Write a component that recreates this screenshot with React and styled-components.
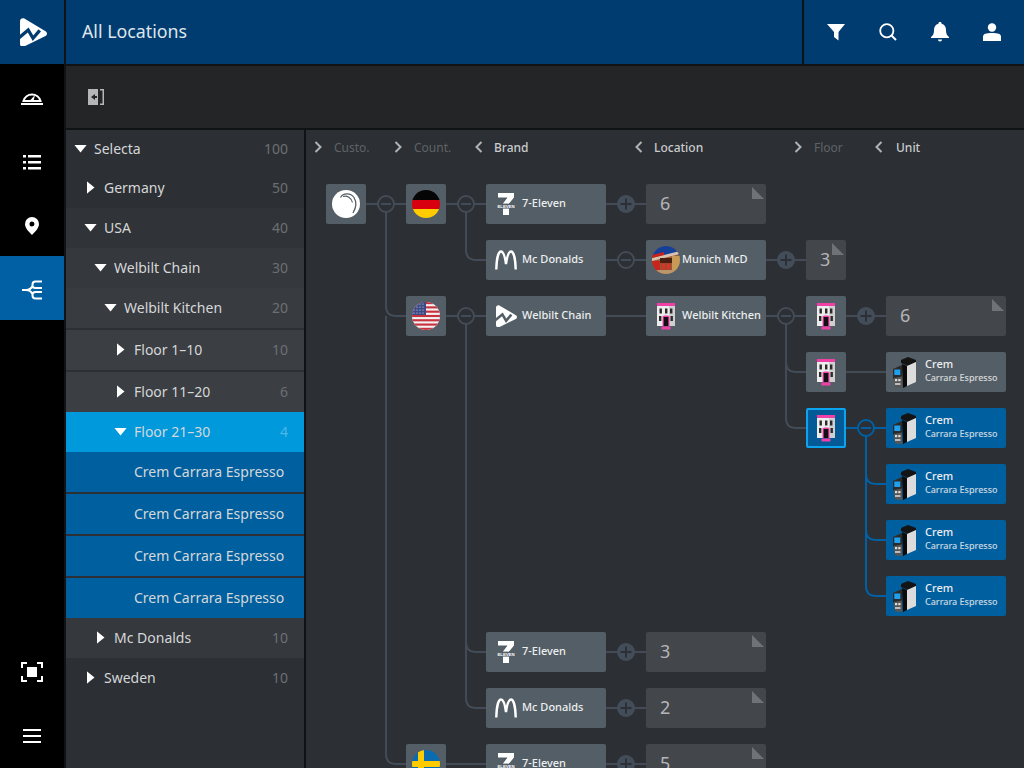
import React from "react";
import styled, { createGlobalStyle } from "styled-components";

const Global = createGlobalStyle`
  html, body { margin: 0; padding: 0; height: 100%; background: #000; overflow: hidden; }
  body { font-family: "Noto Sans", "Open Sans", sans-serif; }
  * { box-sizing: border-box; }
`;

const Shell = styled.div`
  width: 1024px; height: 768px; display: grid;
  grid-template-columns: 64px 1fr; grid-template-rows: 64px 1fr;
  column-gap: 2px; row-gap: 2px; background: #111214; overflow: hidden;
`;
const LogoCell = styled.div`
  background: #003c70; display: flex; align-items: center; justify-content: center;
  padding-left: 3px;
`;
const TopBar = styled.header`
  background: #003c70; display: flex; align-items: stretch;
`;
const Title = styled.h1`
  flex: 1; margin: 0; padding: 0 0 2px 16px; display: flex; align-items: center;
  font-size: 17.8px; font-weight: 400; color: #dfe6ec;
`;
const TopActions = styled.div`
  width: 222px; border-left: 2px solid #111214; display: flex; align-items: center;
  padding-left: 6px;
`;
const TopAction = styled.div`
  width: 52px; display: flex; justify-content: center; align-items: center; color: #fff;
`;
const Rail = styled.nav`
  background: #000; display: flex; flex-direction: column; margin-top: -2px;
`;
const RailItem = styled.div`
  height: 64px; display: flex; align-items: center; justify-content: center; color: #fff;
  padding-top: ${p => (p.$bottom ? 0 : 4)}px;
  background: ${p => (p.$active ? "#0060a3" : "transparent")};
`;
const Spacer = styled.div`flex: 1;`;
const Main = styled.main`
  display: grid; grid-template-rows: 62px 1fr; row-gap: 2px; min-height: 0;
`;
const Toolbar = styled.div`
  background: #232527; display: flex; align-items: center; padding-left: 22px; color: #b4b6b8;
`;
const Body = styled.div`
  display: grid; grid-template-columns: 238px 1fr; column-gap: 2px; min-height: 0;
`;
const Tree = styled.div`
  background: #2c2f33; display: flex; flex-direction: column;
`;
const bgFor = {
  base: "#2c2f33", l1: "#303337", l2: "#35383c", l3: "#383b3f", l4: "#3b3e42",
  selected: "#0099dc", leaf: "#005f9f",
};
const Row = styled.div`
  height: ${p => p.$h || 40}px; flex: none; display: flex; align-items: center;
  padding-left: ${p => 8 + p.$level * 10}px; padding-right: 16px; padding-bottom: 1px;
  margin-top: ${p => (p.$gap ? 2 : 0)}px;
  background: ${p => bgFor[p.$tone]};
  color: #d5d7d9; font-size: 14px;
`;
const Caret = styled.span`
  width: 13px; height: 12px; margin-right: 7px; flex: none; display: flex;
  align-items: center; justify-content: center;
`;
const Down = styled.i`
  display: block; width: 13px; height: 8px; background: #fff;
  clip-path: polygon(0 0, 100% 0, 50% 100%);
`;
const Right = styled.i`
  display: block; width: 8px; height: 13px; background: #fff;
  clip-path: polygon(0 0, 100% 50%, 0 100%);
`;
const RowLabel = styled.span`
  flex: 1; padding-left: ${p => (p.$leaf ? 20 : 0)}px; white-space: nowrap;
`;
const RowCount = styled.span`
  color: ${p => (p.$selected ? "#4fb6e6" : "#6c7074")};
`;
const Canvas = styled.section`
  position: relative; background: #2c2f33; overflow: hidden;
`;
const ColHeads = styled.div`
  display: grid; grid-template-columns: 40px 40px 40px 40px 120px 40px 120px 40px 40px 40px 120px;
  padding: 9px 0 0 8px; height: 54px; align-items: start;
`;
const ColHead = styled.div`
  grid-column: ${p => p.$col}; display: flex; align-items: center; height: 16px;
  white-space: nowrap; font-size: 12px;
  padding-left: ${p => (p.$nudge ? 1 : 0)}px;
  font-weight: ${p => (p.$open ? 500 : 400)};
  color: ${p => (p.$open ? "#c9cbcd" : "#5f6367")};
`;
const Chevron = styled.svg`
  width: 8px; height: 12px; margin-right: ${p => p.$gap}px; flex: none;
  color: #b0b3b6;
`;
const Links = styled.svg`
  position: absolute; left: 0; top: 0; width: 718px; height: 638px; z-index: 2;
`;
const Diagram = styled.div`
  position: relative; display: grid; margin-left: 20px;
  grid-template-columns: 40px 40px 40px 40px 120px 40px 120px 40px 40px 40px 120px;
  grid-auto-rows: 40px; row-gap: 16px;
`;
const nodeBg = { plain: "#545e66", count: "#43464a", active: "#005f9f", focus: "#035a97" };
const Node = styled.div`
  grid-column: ${p => p.$col}; grid-row: ${p => p.$row};
  position: relative; z-index: 3; border-radius: 2px; color: #eceeef;
  background: ${p => nodeBg[p.$kind || "plain"]};
  display: flex; align-items: center;
  justify-content: ${p => (p.$square ? "center" : "flex-start")};
  border: ${p => (p.$kind === "focus" ? "2px solid #0aa5ee" : "none")};
`;
const IconBox = styled.span`
  width: ${p => p.$w ?? 40}px; margin-right: ${p => p.$after ?? -4}px; flex: none;
  display: flex; justify-content: center; align-items: center;
`;
const NodeName = styled.span`
  font-size: 11px; font-weight: 500; white-space: nowrap; margin-top: -3px;
`;
const NodeStack = styled.span`
  display: flex; flex-direction: column; white-space: nowrap; line-height: 14px; margin-top: -2px;
`;
const StackTop = styled.span`font-size: 11px; font-weight: 500;`;
const StackSub = styled.span`font-size: 9px; font-weight: 500; opacity: .85;`;
const CountNum = styled.span`
  font-size: 18px; color: #b4b6b8; padding-left: 14px; margin-top: -2px;
`;
const Fold = styled.i`
  position: absolute; top: 3px; right: 2px; width: 12px; height: 12px; background: #6f7377;
  clip-path: polygon(0 0, 100% 100%, 0 100%);
`;

const LogoMark = ({ size = 28, cut = "#003c70" }) => (
  <svg width={size} height={size * 1.07} viewBox="0 0 28 30">
    <path d="M0 3.500C0 1 2.200-.4 4.500 .6L26.500 13.800C28.500 15 28.500 17.600 26.500 18.600L4.500 29.500C2.200 30.500 0 29.300 0 27Z" fill="#fff" />
    <path d="M-1 20.500 8.500 12.500 13.500 21 20.500 12.800" fill="none" stroke={cut} strokeWidth="3.400" />
  </svg>
);

const Seven = () => (
  <svg width="18" height="22" viewBox="0 0 18 22">
    <path d="M1 0H17V4.500L12 10.500V22H6V10.500L10.500 4.500H1Z" fill="#fff" />
    <rect x="0" y="10.600" width="18" height="5" fill="#545e66" />
    <text x="9" y="14.800" textAnchor="middle" fontSize="4.300" fontWeight="700" fontFamily="Liberation Sans" fill="#fff">ELEVEN</text>
  </svg>
);

const Arches = () => (
  <svg width="22" height="20" viewBox="0 0 22 20">
    <path d="M1.300 19.500C1.500 9 3.500 1.500 6 1.500 8.500 1.500 10 7 11 14 12 7 13.500 1.500 16 1.500 18.500 1.500 20.500 9 20.700 19.500"
      fill="none" stroke="#fff" strokeWidth="2.400" />
  </svg>
);

const Swan = () => (
  <svg width="28" height="28" viewBox="0 0 28 28">
    <circle cx="14" cy="14" r="14" fill="#fff" />
    <path d="M8.500 7.500C11 3 18.500 2.500 22 7.500 24.500 11.500 24.500 17 21 23" fill="none" stroke="#545e66" strokeWidth="1.300" />
    <path d="M11 6.500C15 5 19.500 8 20.500 12.500" fill="none" stroke="#545e66" strokeWidth="1.100" />
  </svg>
);

const FlagClip = ({ id, children }) => (
  <svg width="28" height="28" viewBox="0 0 28 28">
    <defs><clipPath id={id}><circle cx="14" cy="14" r="14" /></clipPath></defs>
    <g clipPath={`url(#${id})`}>{children}</g>
  </svg>
);
const Germany = () => (
  <FlagClip id="de">
    <rect width="28" height="10" fill="#050505" />
    <rect y="10" width="28" height="9" fill="#d8000f" />
    <rect y="19" width="28" height="9" fill="#ffcc00" />
  </FlagClip>
);
const Usa = () => (
  <FlagClip id="us">
    <rect width="28" height="28" fill="#f2f2f2" />
    {[0, 4.300, 8.600, 12.900, 17.200, 21.500, 25.800].map(y => (
      <rect key={y} y={y} width="28" height="2.150" fill="#c8313e" />
    ))}
    <rect width="14" height="13" fill="#3c4a86" />
    {[2, 5, 8, 11].map(y => [2, 5, 8, 11].map(x => (
      <circle key={`${x}-${y}`} cx={x} cy={y} r=".6" fill="#dfe3f0" />
    )))}
  </FlagClip>
);
const Sweden = () => (
  <FlagClip id="se">
    <rect width="28" height="28" fill="#0b6bb0" />
    <rect x="6" width="6" height="28" fill="#fecb00" />
    <rect y="11" width="28" height="6" fill="#fecb00" />
  </FlagClip>
);
const MunichPhoto = () => (
  <FlagClip id="mu">
    <rect width="28" height="28" fill="#9a5a34" />
    <rect width="28" height="9" fill="#163f9a" />
    <path d="M0 12 28 5V8L0 15Z" fill="#d9c2ae" />
    <path d="M0 9 12 6V9L0 12Z" fill="#c8201c" />
    <rect y="15" width="8" height="13" fill="#c9231d" />
    <rect x="8" y="12" width="12" height="5" fill="#4a1f12" />
    <rect x="9" y="17" width="10" height="7" fill="#a8432c" />
    <path d="M10 18h3v5h-3ZM15 18h3v5h-3Z" fill="#d2372c" />
    <rect x="20" y="10" width="8" height="14" fill="#c79a58" />
    <rect y="24" width="28" height="4" fill="#b9966c" />
  </FlagClip>
);
const Building = () => (
  <svg width="18" height="27" viewBox="0 0 18 27">
    <rect x="0" y="3" width="18" height="20" fill="#ececec" />
    <rect x="12" y="3" width="6" height="20" fill="#cfcfcf" />
    <rect x="0" y="0" width="18" height="3" fill="#f13fa8" />
    {[2.500, 8, 13].map(x => <rect key={x} x={x} y="5.500" width="2.400" height="5" fill="#2a2a2a" />)}
    <rect x="2" y="13" width="2.400" height="5" fill="#2a2a2a" />
    <rect x="13.500" y="13" width="2.400" height="5" fill="#2a2a2a" />
    <path d="M5.500 13.500C5.500 12 12.500 12 12.500 13.500V23H5.500Z" fill="#f13fa8" />
    <rect x="6.700" y="14" width="4.600" height="9" fill="#111" />
    <rect x="4.500" y="23.500" width="9" height="3" fill="#f13fa8" />
  </svg>
);
const Machine = () => (
  <svg width="23" height="31" viewBox="0 0 23 31">
    <path d="M8 3 15 0 23 3V5L15 9 8 6Z" fill="#141414" />
    <path d="M14 9 23 5V25L14 29Z" fill="#dcdcdc" />
    <path d="M9 7 14 9V29L10 31Z" fill="#0b0b0b" />
    <path d="M0 12 9 8V20L0 22Z" fill="#2a2a2a" />
    <rect x="1.300" y="12.500" width="6" height="5.500" fill="#1fa0ef" />
    <path d="M.5 21 9 19.500V31L2 30.500Z" fill="#565656" />
    <rect x="2" y="22" width="2.200" height="2.200" fill="#ddd" /><rect x="5.300" y="22" width="2.200" height="2.200" fill="#ddd" />
    <rect x="2" y="26" width="5.500" height="2" fill="#bbb" />
  </svg>
);

const Minus = ({ x, y, blue }) => {
  const c = blue ? "#0060a3" : "#434c56";
  return (
    <g>
      <circle cx={x} cy={y} r="8" fill="#2c2f33" stroke={c} strokeWidth="2" />
      <path d={`M${x - 5} ${y}h10`} stroke={c} strokeWidth="2" />
    </g>
  );
};
const Plus = ({ x, y }) => (
  <g>
    <circle cx={x} cy={y} r="9" fill="#424d59" />
    <path d={`M${x - 5.500} ${y}h11M${x} ${y - 5.500}v11`} stroke="#2c2f33" strokeWidth="2" />
  </g>
);

const treeRows = [
  { label: "Selecta", n: 100, level: 0, tone: "base", open: true, h: 38 },
  { label: "Germany", n: 50, level: 1, tone: "base" },
  { label: "USA", n: 40, level: 1, tone: "l1", open: true },
  { label: "Welbilt Chain", n: 30, level: 2, tone: "l2", open: true },
  { label: "Welbilt Kitchen", n: 20, level: 3, tone: "l3", open: true },
  { label: "Floor 1–10", n: 10, level: 4, tone: "l4", gap: true },
  { label: "Floor 11–20", n: 6, level: 4, tone: "l4", gap: true },
  { label: "Floor 21–30", n: 4, level: 4, tone: "selected", open: true },
  { label: "Crem Carrara Espresso", level: 4, tone: "leaf", leaf: true },
  { label: "Crem Carrara Espresso", level: 4, tone: "leaf", leaf: true, gap: true },
  { label: "Crem Carrara Espresso", level: 4, tone: "leaf", leaf: true, gap: true },
  { label: "Crem Carrara Espresso", level: 4, tone: "leaf", leaf: true, gap: true },
  { label: "Mc Donalds", n: 10, level: 2, tone: "l2" },
  { label: "Sweden", n: 10, level: 1, tone: "base" },
];

const columns = [
  { col: 1, label: "Custo.", gap: 12 }, { col: 3, label: "Count.", gap: 12 },
  { col: 5, label: "Brand", open: true, nudge: true, gap: 11 },
  { col: 7, label: "Location", open: true, nudge: true, gap: 11 },
  { col: 9, label: "Floor", gap: 12 },
  { col: 11, label: "Unit", open: true, nudge: true, gap: 13 },
];

const COL = { cust: 1, country: 3, brand: 5, loc: 7, floor: 9, unit: 11 };

const Named = ({ col, row, icon, name }) => (
  <Node $col={col} $row={row}><IconBox>{icon}</IconBox><NodeName>{name}</NodeName></Node>
);
const Square = ({ col, row, kind, children }) => (
  <Node $col={col} $row={row} $square $kind={kind}>{children}</Node>
);
const Count = ({ col, row, n }) => (
  <Node $col={col} $row={row} $kind="count"><CountNum>{n}</CountNum><Fold /></Node>
);
const Crem = ({ row, active }) => (
  <Node $col={COL.unit} $row={row} $kind={active ? "active" : "plain"}>
    <IconBox $w={37} $after={2}><Machine /></IconBox>
    <NodeStack><StackTop>Crem</StackTop><StackSub>Carrara Espresso</StackSub></NodeStack>
  </Node>
);

const Lines = () => (
  <Links viewBox="306 130 718 638">
    <g fill="none" stroke="#434c56" strokeWidth="2">
      <path d="M366 204H406M386 204V306Q386 316 396 316H406M386 316V754Q386 764 396 764H406" />
      <path d="M446 204H486M466 204V250Q466 260 476 260H486M606 204H646M606 260H646M766 260H806" />
      <path d="M446 316H646M766 316H886M466 316V642Q466 652 476 652H486M466 642V698Q466 708 476 708H486" />
      <path d="M786 316V362Q786 372 796 372H806M786 362V418Q786 428 796 428H806M846 372H886" />
      <path d="M606 652H646M606 708H646M606 764H646M446 764H486" />
    </g>
    <g fill="none" stroke="#0060a3" strokeWidth="2">
      <path d="M846 428H886M866 428V474Q866 484 876 484H886M866 474V530Q866 540 876 540H886M866 530V586Q866 596 876 596H886" />
    </g>
    <Minus x={386} y={204} /><Minus x={466} y={204} /><Minus x={466} y={316} />
    <Minus x={626} y={260} /><Minus x={786} y={316} /><Minus x={866} y={428} blue />
    <Plus x={626} y={204} /><Plus x={786} y={260} /><Plus x={866} y={316} />
    <Plus x={626} y={652} /><Plus x={626} y={708} /><Plus x={626} y={764} />
  </Links>
);

export default function App() {
  return (
    <>
      <Global />
      <Shell>
        <LogoCell><LogoMark size={27} /></LogoCell>
        <TopBar>
          <Title>All Locations</Title>
          <TopActions>
            <TopAction>
              <svg width="18" height="18" viewBox="0 0 18 18"><path d="M0 1H18L11.500 9V17.500L7 14V9Z" fill="currentColor" /></svg>
            </TopAction>
            <TopAction>
              <svg width="18" height="18" viewBox="0 0 18 18"><circle cx="7.800" cy="7.800" r="6.600" fill="none" stroke="currentColor" strokeWidth="1.800" /><path d="M12.500 12.500 17 17" stroke="currentColor" strokeWidth="2" /></svg>
            </TopAction>
            <TopAction>
              <svg width="18" height="20" viewBox="0 0 18 20"><path d="M9 0a1.500 1.500 0 0 1 1.500 1.800C13.500 2.500 15 5 15 8c0 4 1 5.500 3 7v1H0v-1c2-1.500 3-3 3-7 0-3 1.500-5.500 4.500-6.200A1.500 1.500 0 0 1 9 0Z" fill="currentColor" /><path d="M7 17.500h4a2 2 0 0 1-4 0Z" fill="currentColor" /></svg>
            </TopAction>
            <TopAction>
              <svg width="18" height="18" viewBox="0 0 18 18"><circle cx="9" cy="4.500" r="4.200" fill="currentColor" /><path d="M0 18V13.500C0 11 3 10 9 10s9 1 9 3.500V18Z" fill="currentColor" /></svg>
            </TopAction>
          </TopActions>
        </TopBar>
        <Rail>
          <RailItem>
            <svg width="22" height="16" viewBox="0 0 22 16" fill="none"><path d="M2.500 11A8.800 8.800 0 0 1 19.500 11Z" stroke="#fff" strokeWidth="2" /><path d="M9 10.500 14 5l-1.500 6Z" fill="#fff" /><rect x="0" y="13" width="22" height="2" fill="#fff" /></svg>
          </RailItem>
          <RailItem>
            <svg width="18" height="16" viewBox="0 0 18 16" fill="#fff"><rect y="1" width="3" height="2.500" /><rect x="5" y="1" width="13" height="2.500" /><rect y="7" width="3" height="2.500" /><rect x="5" y="7" width="13" height="2.500" /><rect y="13" width="3" height="2.500" /><rect x="5" y="13" width="13" height="2.500" /></svg>
          </RailItem>
          <RailItem>
            <svg width="14" height="18" viewBox="0 0 14 18"><path fillRule="evenodd" d="M7 0a7 7 0 0 1 7 7c0 4-4 8-7 11C4 15 0 11 0 7a7 7 0 0 1 7-7Zm0 4.500a2.500 2.500 0 1 0 0 5 2.500 2.500 0 0 0 0-5Z" fill="#fff" /></svg>
          </RailItem>
          <RailItem $active>
            <svg width="20" height="20" viewBox="0 0 20 20" fill="none" stroke="#fff" strokeWidth="2"><path d="M0 10H4C7 10 9 9 10.500 6M4 10C7 10 9 11 10.500 14M20 1.500H13.500C11.500 1.500 10.500 2.500 10.500 4.500V5.500C10.500 7.500 11.500 8 13.500 8H20M20 12H13.500C11.500 12 10.500 12.500 10.500 14.500V15.500C10.500 17.500 11.500 18.500 13.500 18.500H20" /></svg>
          </RailItem>
          <Spacer />
          <RailItem $bottom>
            <svg width="22" height="20" viewBox="0 0 22 20" fill="none"><path d="M1 6V1H6M16 1H21V6M21 14V19H16M6 19H1V14" stroke="#fff" strokeWidth="2" /><rect x="6" y="5" width="10" height="10" fill="#fff" /></svg>
          </RailItem>
          <RailItem $bottom>
            <svg width="18" height="14" viewBox="0 0 18 14" fill="#fff"><rect y="0" width="18" height="2" /><rect y="6" width="18" height="2" /><rect y="12" width="18" height="2" /></svg>
          </RailItem>
        </Rail>
        <Main>
          <Toolbar>
            <svg width="16" height="16" viewBox="0 0 16 16" fill="currentColor">
              <path fillRule="evenodd" d="M0 0H10V16H0ZM7 5 3 8l4 3V9H9V7H7Z" />
              <path d="M12 0H16V16H12V14.500H14.500V1.500H12Z" />
            </svg>
          </Toolbar>
          <Body>
            <Tree>
              {treeRows.map((r, i) => (
                <Row key={i} $level={r.level} $tone={r.tone} $gap={r.gap} $h={r.h}>
                  {r.leaf ? null : <Caret>{r.open ? <Down /> : <Right />}</Caret>}
                  <RowLabel $leaf={r.leaf}>{r.label}</RowLabel>
                  {r.n != null && <RowCount $selected={r.tone === "selected"}>{r.n}</RowCount>}
                </Row>
              ))}
            </Tree>
            <Canvas>
              <Lines />
              <ColHeads>
                {columns.map(c => (
                  <ColHead key={c.label} $col={c.col} $open={c.open} $nudge={c.nudge}>
                    <Chevron $gap={c.gap} viewBox="0 0 8 12" fill="none" stroke="currentColor" strokeWidth="2">
                      <path d={c.open ? "M6.500 1 1.500 6l5 5" : "M1.500 1l5 5-5 5"} />
                    </Chevron>
                    {c.label}
                  </ColHead>
                ))}
              </ColHeads>
              <Diagram>
                <Square col={COL.cust} row={1}><Swan /></Square>
                <Square col={COL.country} row={1}><Germany /></Square>
                <Named col={COL.brand} row={1} icon={<Seven />} name="7-Eleven" />
                <Count col={COL.loc} row={1} n={6} />

                <Named col={COL.brand} row={2} icon={<Arches />} name="Mc Donalds" />
                <Named col={COL.loc} row={2} icon={<MunichPhoto />} name="Munich McD" />
                <Count col={COL.floor} row={2} n={3} />

                <Square col={COL.country} row={3}><Usa /></Square>
                <Named col={COL.brand} row={3} icon={<LogoMark size={21} cut="#545e66" />} name="Welbilt Chain" />
                <Named col={COL.loc} row={3} icon={<Building />} name="Welbilt Kitchen" />
                <Square col={COL.floor} row={3}><Building /></Square>
                <Count col={COL.unit} row={3} n={6} />

                <Square col={COL.floor} row={4}><Building /></Square>
                <Crem row={4} />
                <Square col={COL.floor} row={5} kind="focus"><Building /></Square>
                <Crem row={5} active />
                <Crem row={6} active />
                <Crem row={7} active />
                <Crem row={8} active />

                <Named col={COL.brand} row={9} icon={<Seven />} name="7-Eleven" />
                <Count col={COL.loc} row={9} n={3} />
                <Named col={COL.brand} row={10} icon={<Arches />} name="Mc Donalds" />
                <Count col={COL.loc} row={10} n={2} />

                <Square col={COL.country} row={11}><Sweden /></Square>
                <Named col={COL.brand} row={11} icon={<Seven />} name="7-Eleven" />
                <Count col={COL.loc} row={11} n={5} />
              </Diagram>
            </Canvas>
          </Body>
        </Main>
      </Shell>
    </>
  );
}
